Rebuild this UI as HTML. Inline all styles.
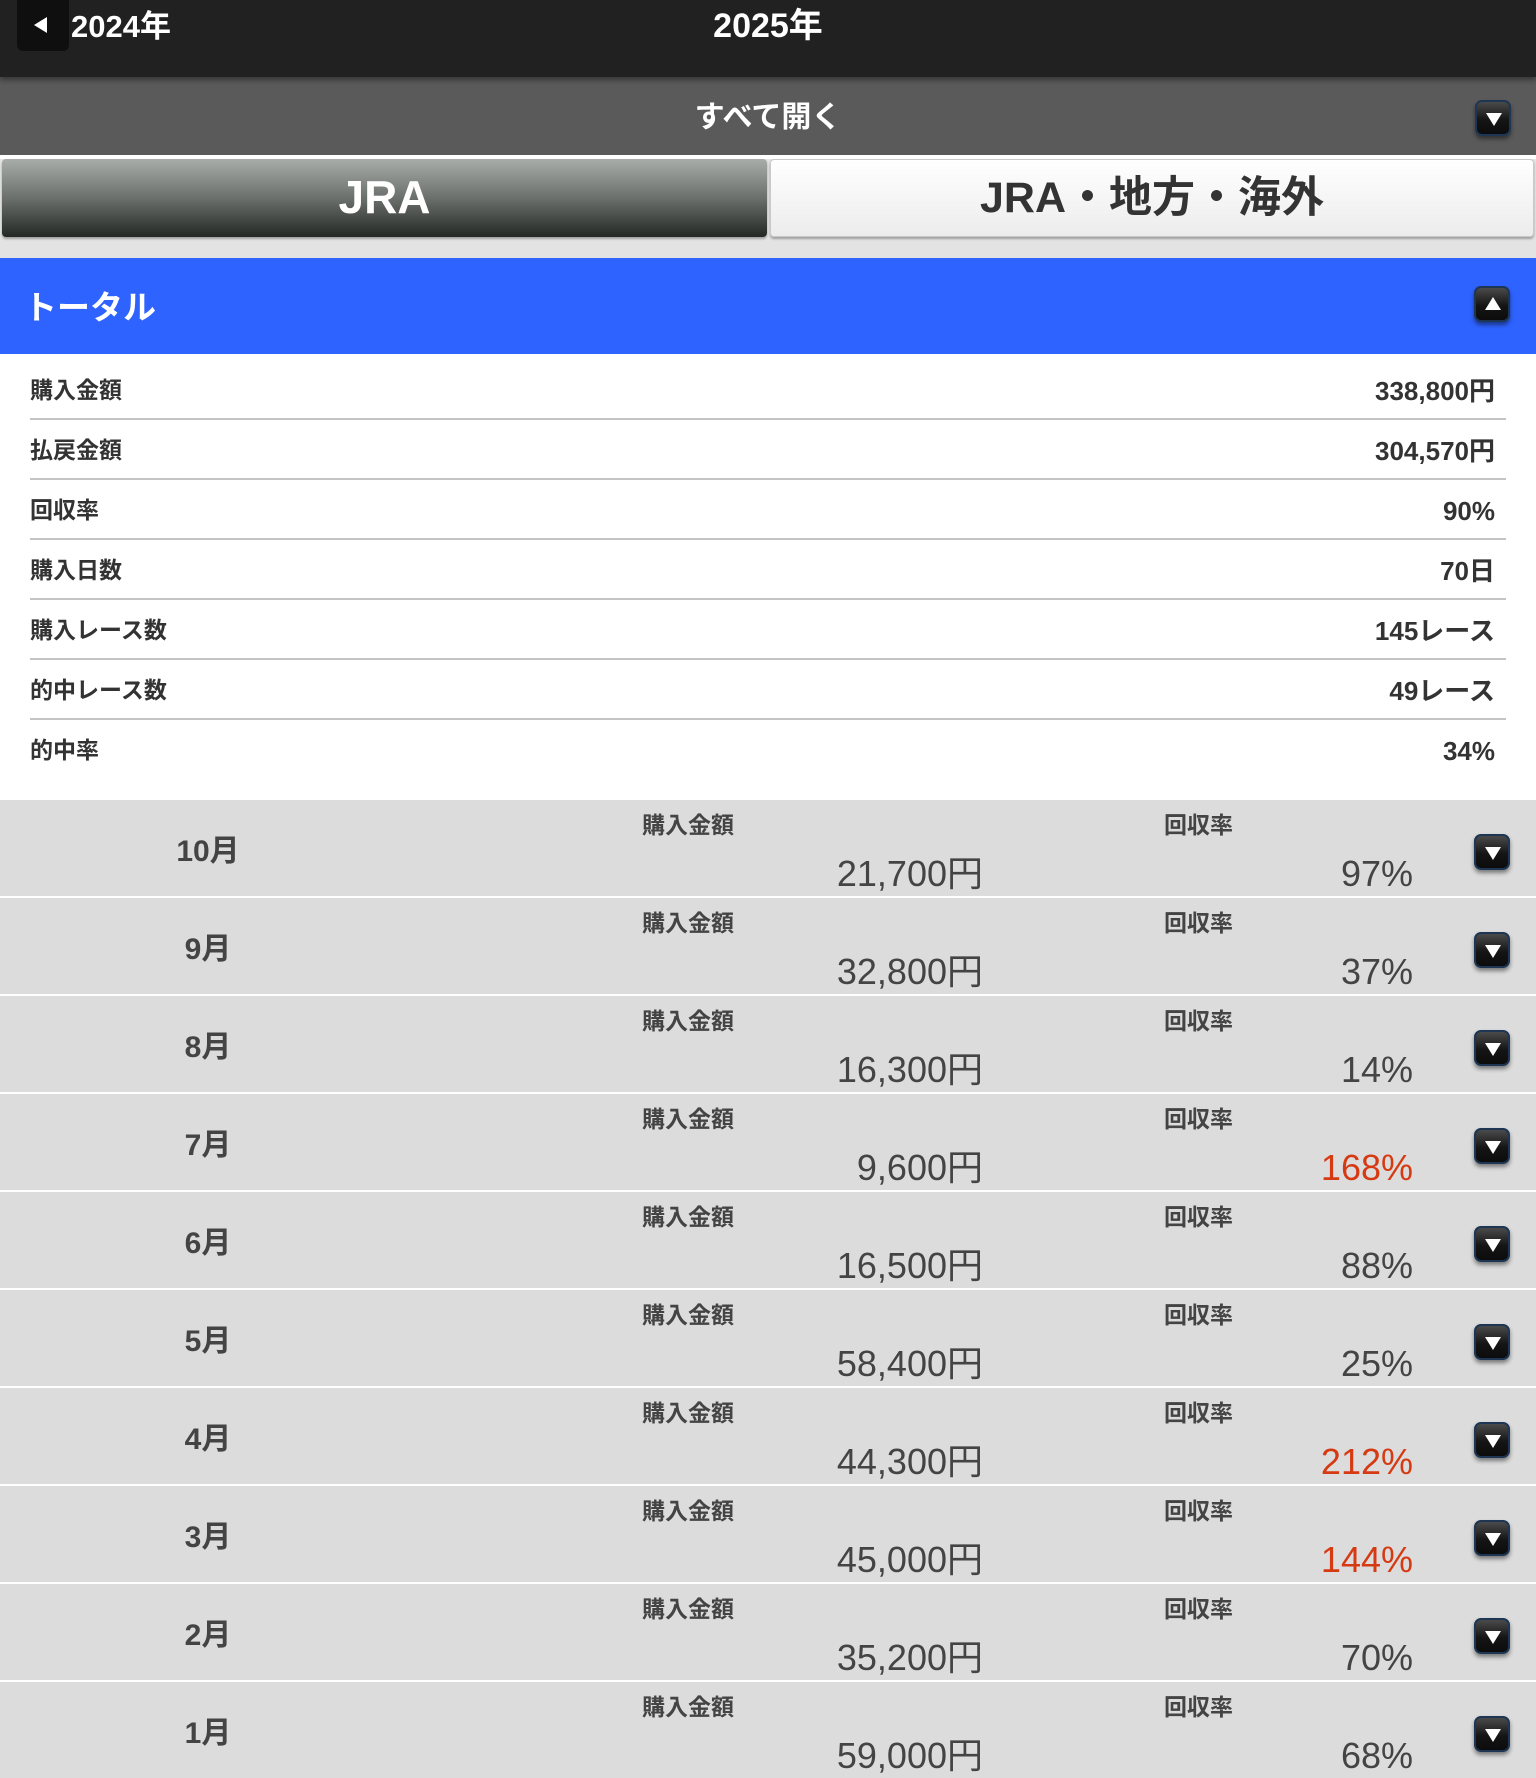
<!DOCTYPE html>
<html><head><meta charset="utf-8">
<style>
*{margin:0;padding:0;box-sizing:border-box}
body{width:1536px;height:1775px;overflow:hidden;background:#e3e3e3;font-family:"Liberation Sans","Noto Sans CJK JP",sans-serif;position:relative;line-height:1.2}
div{line-height:1.2}
.a{position:absolute;white-space:nowrap}
.btn{position:absolute;width:36px;height:36px;border-radius:7px;border:2px solid #1d3653;background:linear-gradient(#4a4a4a,#151515 55%,#0c0c0c);box-shadow:0 3px 4px rgba(0,0,0,.45)}
.btn:after{content:"";position:absolute;left:9px;top:11px;border-left:8px solid transparent;border-right:8px solid transparent;border-top:13px solid #fff}
.btn.up:after{border-top:none;border-bottom:13px solid #fff;top:9px}
.trow{position:absolute;left:0;width:1536px;height:60px}
.trow .l{position:absolute;left:30px;top:18px;font-size:23px;font-weight:bold;color:#333}
.trow .r{position:absolute;right:41px;top:17px;font-size:26px;font-weight:bold;color:#333}
.trow .ln{position:absolute;left:30px;width:1476px;top:59px;height:2px;background:#c4c4c4}
.m{position:absolute;left:0;width:1536px;height:96px;background:#dcdcdc}
.m .mo{position:absolute;left:0;width:416px;text-align:center;top:34px;font-size:30px;font-weight:bold;color:#444}
.m .lb{position:absolute;top:12px;font-size:23px;font-weight:bold;color:#444}
.m .v{position:absolute;top:52px;font-size:36px;color:#444;text-align:right}
.m .red{color:#d63a12}
</style></head><body>
<div class="a" style="left:0;top:0;width:1536px;height:77px;background:#212121;box-shadow:0 3px 5px rgba(0,0,0,.4);z-index:2"></div>
<div class="a" style="left:17px;top:0;width:52px;height:51px;background:#0f0f0f;border-radius:0 0 6px 6px;z-index:3"></div>
<div class="a" style="left:34px;top:17px;border-top:8px solid transparent;border-bottom:8px solid transparent;border-right:13px solid #fff;z-index:3"></div>
<div class="a" style="left:71px;top:8px;font-size:31px;font-weight:bold;color:#fff;z-index:3">2024年</div>
<div class="a" style="left:0;width:1536px;text-align:center;top:6px;font-size:34px;font-weight:bold;color:#fff;z-index:3">2025年</div>
<div class="a" style="left:0;top:77px;width:1536px;height:78px;background:#5a5a5a"></div>
<div class="a" style="left:0;width:1536px;text-align:center;top:100px;font-size:30px;font-weight:bold;color:#fff">すべて開く</div>
<div class="btn" style="left:1475px;top:100px"></div>
<div class="a" style="left:0;top:155px;width:1536px;height:4px;background:#fff"></div>
<div class="a" style="left:0;top:159px;width:1536px;height:99px;background:#e3e3e3"></div>
<div class="a" style="left:2px;top:159px;width:765px;height:78px;border-radius:4px;background:linear-gradient(#a9adaa,#6b706c 50%,#242824);box-shadow:0 2px 2px rgba(0,0,0,.3)"></div>
<div class="a" style="left:2px;width:765px;text-align:center;top:170px;font-size:46px;font-weight:bold;color:#fff">JRA</div>
<div class="a" style="left:770px;top:159px;width:764px;height:78px;border-radius:4px;background:linear-gradient(#fff,#ececec);border:1px solid #c9c9c9;box-shadow:0 2px 2px rgba(0,0,0,.3)"></div>
<div class="a" style="left:770px;width:764px;text-align:center;top:173px;font-size:43px;font-weight:bold;color:#333">JRA・地方・海外</div>
<div class="a" style="left:0;top:258px;width:1536px;height:96px;background:#2f63ff"></div>
<div class="a" style="left:24px;top:288px;font-size:33px;font-weight:bold;color:#fff">トータル</div>
<div class="btn up" style="left:1474px;top:286px"></div>
<div class="a" style="left:0;top:354px;width:1536px;height:446px;background:#fff"></div>
<div class="trow" style="top:359px"><div class="l">購入金額</div><div class="r">338,800円</div><div class="ln"></div></div>
<div class="trow" style="top:419px"><div class="l">払戻金額</div><div class="r">304,570円</div><div class="ln"></div></div>
<div class="trow" style="top:479px"><div class="l">回収率</div><div class="r">90%</div><div class="ln"></div></div>
<div class="trow" style="top:539px"><div class="l">購入日数</div><div class="r">70日</div><div class="ln"></div></div>
<div class="trow" style="top:599px"><div class="l">購入レース数</div><div class="r">145レース</div><div class="ln"></div></div>
<div class="trow" style="top:659px"><div class="l">的中レース数</div><div class="r">49レース</div><div class="ln"></div></div>
<div class="trow" style="top:719px"><div class="l">的中率</div><div class="r">34%</div></div>

<div class="a" style="left:0;top:800px;width:1536px;height:975px;background:#fff"></div>
<div class="m" style="top:800px"><div class="mo">10月</div><div class="lb" style="left:642px">購入金額</div><div class="lb" style="left:1164px">回収率</div><div class="v" style="right:553px">21,700円</div><div class="v" style="right:123px">97%</div><div class="btn" style="left:1474px;top:34px"></div></div>
<div class="m" style="top:898px"><div class="mo">9月</div><div class="lb" style="left:642px">購入金額</div><div class="lb" style="left:1164px">回収率</div><div class="v" style="right:553px">32,800円</div><div class="v" style="right:123px">37%</div><div class="btn" style="left:1474px;top:34px"></div></div>
<div class="m" style="top:996px"><div class="mo">8月</div><div class="lb" style="left:642px">購入金額</div><div class="lb" style="left:1164px">回収率</div><div class="v" style="right:553px">16,300円</div><div class="v" style="right:123px">14%</div><div class="btn" style="left:1474px;top:34px"></div></div>
<div class="m" style="top:1094px"><div class="mo">7月</div><div class="lb" style="left:642px">購入金額</div><div class="lb" style="left:1164px">回収率</div><div class="v" style="right:553px">9,600円</div><div class="v red" style="right:123px">168%</div><div class="btn" style="left:1474px;top:34px"></div></div>
<div class="m" style="top:1192px"><div class="mo">6月</div><div class="lb" style="left:642px">購入金額</div><div class="lb" style="left:1164px">回収率</div><div class="v" style="right:553px">16,500円</div><div class="v" style="right:123px">88%</div><div class="btn" style="left:1474px;top:34px"></div></div>
<div class="m" style="top:1290px"><div class="mo">5月</div><div class="lb" style="left:642px">購入金額</div><div class="lb" style="left:1164px">回収率</div><div class="v" style="right:553px">58,400円</div><div class="v" style="right:123px">25%</div><div class="btn" style="left:1474px;top:34px"></div></div>
<div class="m" style="top:1388px"><div class="mo">4月</div><div class="lb" style="left:642px">購入金額</div><div class="lb" style="left:1164px">回収率</div><div class="v" style="right:553px">44,300円</div><div class="v red" style="right:123px">212%</div><div class="btn" style="left:1474px;top:34px"></div></div>
<div class="m" style="top:1486px"><div class="mo">3月</div><div class="lb" style="left:642px">購入金額</div><div class="lb" style="left:1164px">回収率</div><div class="v" style="right:553px">45,000円</div><div class="v red" style="right:123px">144%</div><div class="btn" style="left:1474px;top:34px"></div></div>
<div class="m" style="top:1584px"><div class="mo">2月</div><div class="lb" style="left:642px">購入金額</div><div class="lb" style="left:1164px">回収率</div><div class="v" style="right:553px">35,200円</div><div class="v" style="right:123px">70%</div><div class="btn" style="left:1474px;top:34px"></div></div>
<div class="m" style="top:1682px"><div class="mo">1月</div><div class="lb" style="left:642px">購入金額</div><div class="lb" style="left:1164px">回収率</div><div class="v" style="right:553px">59,000円</div><div class="v" style="right:123px">68%</div><div class="btn" style="left:1474px;top:34px"></div></div>
</body></html>
